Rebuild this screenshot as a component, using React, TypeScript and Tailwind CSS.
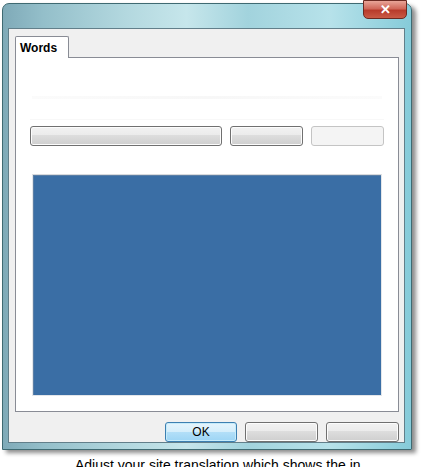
import React from 'react';

const font = { fontFamily: '"Liberation Sans", Arial, sans-serif' };

function VistaButton({ label, disabled, primary, className }: { label?: string; disabled?: boolean; primary?: boolean; className?: string }) {
    if (primary) {
        return (
            <div className={`h-[20px] rounded-[3px] border border-[#3c7fb1] bg-[linear-gradient(#e5f4fc_0%,#d4eefb_50%,#b2dff8_51%,#9dd5f5_100%)] shadow-[inset_0_0_0_1px_#c5ebfa] flex items-center justify-center text-[12px] text-black ${className}`}>
                {label}
            </div>
        );
    }
    if (disabled) {
        return <div className={`h-[20px] rounded-[3px] border border-[#c4c4c4] bg-[#f4f4f4] ${className}`} />;
    }
    return (
        <div className={`h-[20px] rounded-[3px] border border-[#707070] bg-[linear-gradient(#f2f2f2_0%,#ebebeb_45%,#dddddd_46%,#cfcfcf_100%)] shadow-[inset_0_0_0_1px_#fcfcfc] ${className}`} />
    );
}

export default function App() {
    return (
        <div className="w-[422px] h-[467px] bg-white relative overflow-hidden" style={font}>
            {/* window frame */}
            <div className="ml-[2px] mt-[3px] w-[410px] h-[447px] relative rounded-t-[7px] border border-[#3f6a72] bg-[linear-gradient(90deg,#7faab8_0%,#94bfca_10%,#b3d8df_30%,#c6e6eb_45%,#a2d3dd_60%,#b7e2ea_80%,#86cbd9_100%)] shadow-[4px_3px_4px_rgba(0,0,0,0.45)] pt-[24px] pl-[5px] pr-[6px] pb-[6px]">
                {/* close */}
                <div className="absolute top-[-4px] right-[4px] w-[44px] h-[19px] rounded-b-[5px] border border-[#6b2a22] bg-[linear-gradient(#e8a598_0%,#d0685a_45%,#b83b2b_55%,#c95a45_100%)] flex items-center justify-center text-white text-[13px] font-bold leading-none">
                    ✕
                </div>

                {/* client area */}
                <div className="w-full h-full bg-[#f0f0f0] border border-[#627f8a] flex flex-col pl-[6px] pr-[5px] pt-[7px]">
                    {/* tab strip */}
                    <div className="flex h-[21px]">
                        <div className="w-[54px] h-[22px] bg-white border border-[#898c95] border-b-0 rounded-t-[2px] flex items-center pl-[4px] text-[12px] font-bold text-black relative z-10">
                            Words
                        </div>
                    </div>
                    {/* tab panel */}
                    <div className="h-[358px] bg-white border border-[#898c95] flex flex-col px-[14px]">
                        <div className="mt-[38px] h-[3px] mx-[2px] bg-[linear-gradient(90deg,#fbfbfb,#f7f7f7,#fbfbfb)]" />
                        <div className="mt-[20px] h-px bg-[#f8f8f8]" />
                        <div className="mt-[6px] flex gap-[8px]">
                            <VistaButton className="w-[192px]" />
                            <VistaButton className="w-[73px]" />
                            <VistaButton disabled className="w-[73px]" />
                        </div>
                        <div className="mt-[28px] mx-[2px] h-[222px] border border-[#e3e6ea] border-t-[#d8dadd] bg-[#3a6ea5] shadow-[inset_1px_1px_0_#5b7fa6]" />
                    </div>
                    {/* bottom buttons */}
                    <div className="mt-[10px] flex justify-end gap-[8px]">
                        <VistaButton primary label="OK" className="w-[72px]" />
                        <VistaButton className="w-[73px]" />
                        <VistaButton className="w-[73px]" />
                    </div>
                </div>
            </div>
            {/* text behind the window, cut off by the picture's edge */}
            <div className="absolute left-[75px] top-[458px] text-[14px] text-black whitespace-nowrap leading-none">
                Adjust your site translation which shows the in
            </div>
        </div>
    );
}
